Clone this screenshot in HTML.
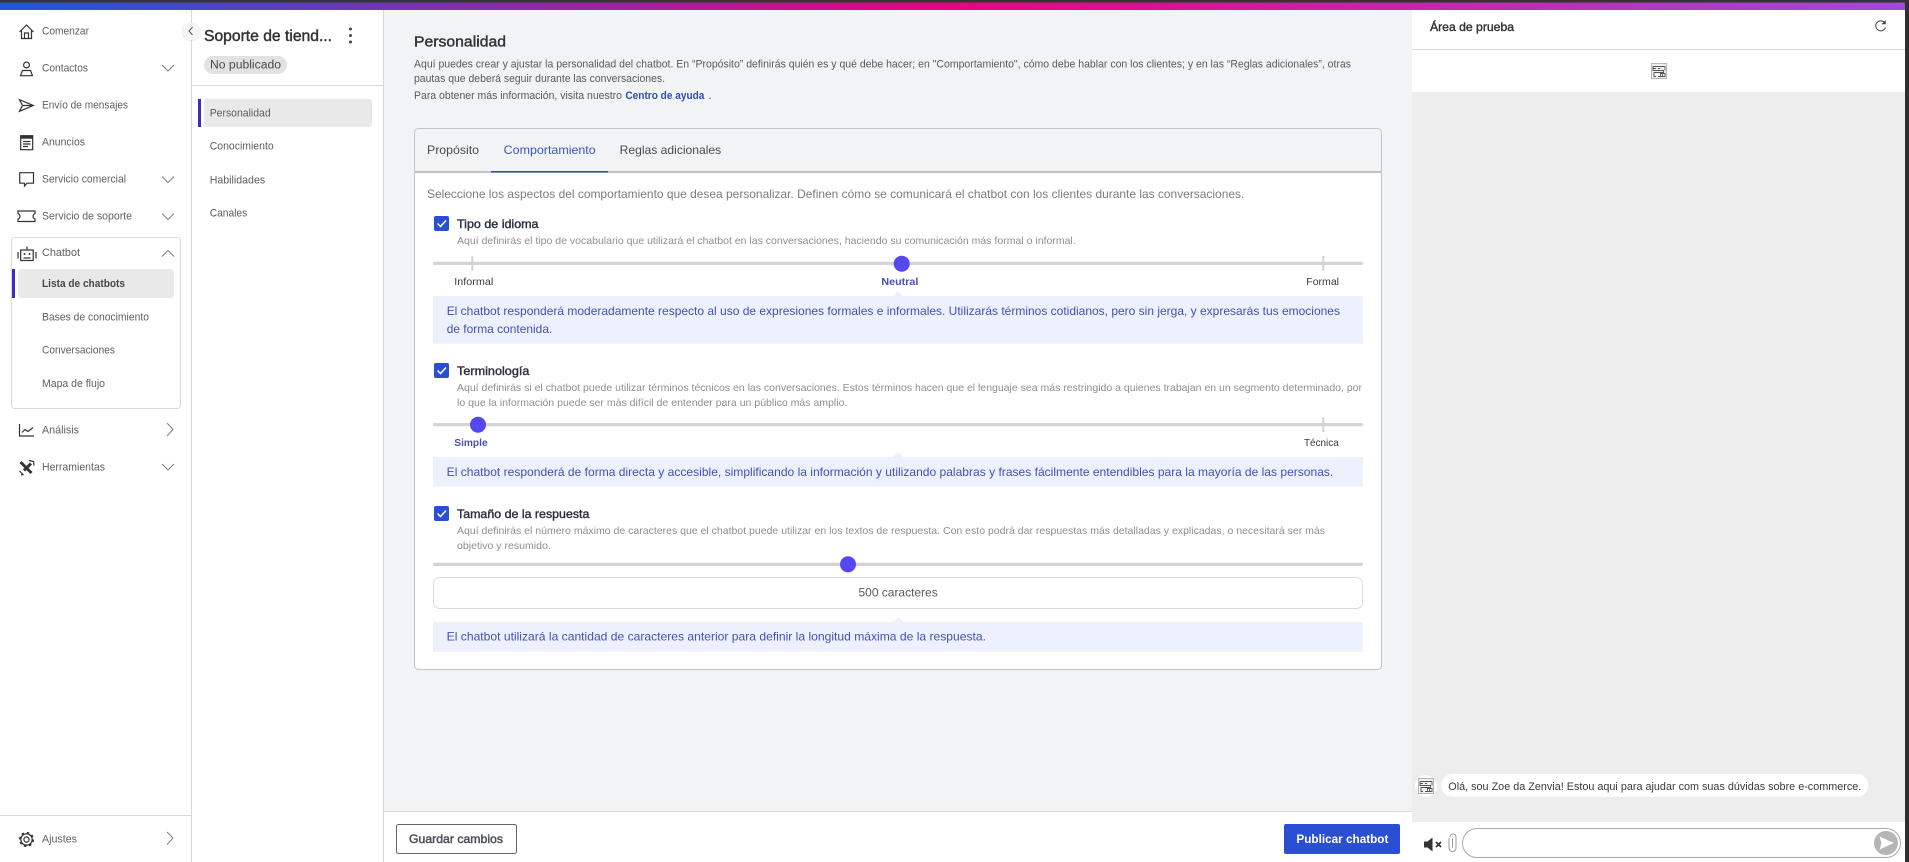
<!DOCTYPE html>
<html lang="es">
<head>
<meta charset="utf-8">
<title>Personalidad - Chatbot</title>
<style>
html,body{margin:0;padding:0;background:#fff;width:1909px;height:862px;overflow:hidden}
svg{display:block}
text{font-family:"Liberation Sans",Arial,sans-serif;white-space:pre}
.nav{font-size:11px;fill:#606060}
.nv2{font-size:11px;fill:#5c5c5c}
.desc{font-size:11px;fill:#5a5a5a}
.tab{font-size:12px;fill:#4a4a4a}
.sub{font-size:10.5px;fill:#8f8f8f}
.ttl{font-size:12px;fill:#2d3040;stroke:#2d3040;stroke-width:.4}
.note{font-size:12px;fill:#4351b4}
.lbl{font-size:10.5px;fill:#3a3a3a}
.lblb{font-size:10.5px;fill:#4a50ac;font-weight:700}
.ic{fill:none;stroke:#333;stroke-width:1.2}
.ch{fill:none;stroke:#808080;stroke-width:1}
.tick{fill:#d3d3d8}
.track{fill:#d3d3d8}
.thumb{fill:#5548f0}
.nb{fill:#ecf1fd}
</style>
</head>
<body>
<svg width="1909" height="862" viewBox="0 0 1909 862" xmlns="http://www.w3.org/2000/svg">
<defs>
<linearGradient id="g" x1="0" x2="1" y1="0" y2="0">
<stop offset="0" stop-color="#2058d8"/>
<stop offset=".5" stop-color="#e6057f"/>
<stop offset="1" stop-color="#a04ad8"/>
</linearGradient>
<symbol id="maze" viewBox="0 0 16 16">
<rect x=".5" y=".5" width="15" height="15" fill="#f0f0f0" stroke="#b5b5b5"/>
<path d="M2 3.500H14M2 5.500H5M7 5.500H9M2 3.500V7.500H12.500V9.500H3V13.500H5M14 3.500V7.500M7 13.500H14V10.500H9.500V13.500M11.500 10.500V13.500" fill="none" stroke="#555" stroke-width=".9"/>
</symbol>
</defs>

<!-- page -->
<rect width="1909" height="862" fill="#fff"/>
<rect x="384" y="10" width="1028" height="802" fill="#f2f3f5"/>
<rect x="1412" y="92" width="493" height="730" fill="#ededed"/>
<rect x="1905" y="0" width="4" height="862" fill="#2f2f2f"/>
<rect width="1909" height="2.500" fill="#333"/>
<rect y="2.500" width="1905" height="7.500" fill="url(#g)"/>

<!-- dividers -->
<rect x="191" y="10" width="1" height="852" fill="#d9d9d9"/>
<rect x="383" y="10" width="1" height="852" fill="#d9d9d9"/>
<rect x="192" y="85" width="192" height="1" fill="#d9d9d9"/>
<rect x="0" y="815" width="191" height="1" fill="#d9d9d9"/>
<rect x="384" y="811" width="1028" height="1" fill="#d9d9d9"/>

<!-- sidebar -->
<rect x="11.500" y="237.500" width="169" height="171" rx="3" fill="#fff" stroke="#d9d9d9"/>
<rect x="18" y="269" width="156" height="29" rx="3" fill="#e9e9e9"/>
<rect x="12" y="269" width="3" height="29" fill="#3f28c4"/>

<text class="nav" x="42" y="34.500" textLength="47" lengthAdjust="spacingAndGlyphs">Comenzar</text>
<text class="nav" x="42" y="71.500" textLength="46" lengthAdjust="spacingAndGlyphs">Contactos</text>
<text class="nav" x="42" y="108.500" textLength="86" lengthAdjust="spacingAndGlyphs">Envío de mensajes</text>
<text class="nav" x="42" y="145.500" textLength="43" lengthAdjust="spacingAndGlyphs">Anuncios</text>
<text class="nav" x="42" y="182.500" textLength="84" lengthAdjust="spacingAndGlyphs">Servicio comercial</text>
<text class="nav" x="42" y="219.500" textLength="90" lengthAdjust="spacingAndGlyphs">Servicio de soporte</text>
<text class="nav" x="42" y="256" textLength="38" lengthAdjust="spacingAndGlyphs">Chatbot</text>
<text x="42" y="287" font-size="11" font-weight="700" fill="#484848" textLength="83" lengthAdjust="spacingAndGlyphs">Lista de chatbots</text>
<text class="nav" x="42" y="320.500" textLength="107" lengthAdjust="spacingAndGlyphs">Bases de conocimiento</text>
<text class="nav" x="42" y="353.500" textLength="73" lengthAdjust="spacingAndGlyphs">Conversaciones</text>
<text class="nav" x="42" y="387" textLength="63" lengthAdjust="spacingAndGlyphs">Mapa de flujo</text>
<text class="nav" x="42" y="433.500" textLength="37" lengthAdjust="spacingAndGlyphs">Análisis</text>
<text class="nav" x="42" y="470.500" textLength="63" lengthAdjust="spacingAndGlyphs">Herramientas</text>
<text class="nav" x="42" y="842.500" textLength="35" lengthAdjust="spacingAndGlyphs">Ajustes</text>

<!-- sidebar chevrons -->
<path class="ch" d="M162 65L168 71L174 65M162 176.500L168 182.500L174 176.500M162 213.500L168 219.500L174 213.500M162 256.500L168 250.500L174 256.500M162 464L168 470L174 464"/>
<path class="ch" d="M167 423L173 429.500L167 436M167 832L173 838L167 844.500"/>

<!-- sidebar icons -->
<path class="ic" d="M19.500 32L26.500 25L33.500 32M21.500 30.500V38.500H31.500V30.500M24.500 38.500V33H28.500V38.500"/>
<circle class="ic" cx="26.500" cy="65" r="2.900"/>
<path class="ic" d="M22.500 70.500H30.500L32.500 75.700H20.500Z"/>
<path class="ic" d="M19.500 99.700L33.300 105.500L19.500 111.300L22.500 105.500ZM22.500 105.500H33"/>
<rect class="ic" x="20.700" y="135.700" width="12" height="14"/>
<rect x="20.700" y="135.700" width="12" height="3" fill="#333"/>
<path class="ic" stroke-width="1" d="M23 141.500H30.500M23 144H30.500M23 146.500H28"/>
<path class="ic" d="M19.700 172.700H33.500V183.200H27L24.500 186V183.200H19.700Z"/>
<path class="ic" d="M18 211H35V213.500C32.500 214.500 32.500 218 35 219V221.500H18V219C20.500 218 20.500 214.500 18 213.500Z"/>
<rect class="ic" x="20.700" y="250" width="12.500" height="10.500"/>
<path class="ic" d="M27 246.500V250M18 252V258.500M36 252V258.500"/>
<circle cx="24.500" cy="254" r="1" fill="#333"/><circle cx="29.500" cy="254" r="1" fill="#333"/>
<path class="ic" stroke-width="1" d="M23.500 258H30.500"/>
<path class="ic" d="M19.500 424V436H34M22 432.500L25 429.500L28 431.500L33 427.500"/>
<path d="M20.500 462L31.500 473M31 463.500L24 470.500" fill="none" stroke="#333" stroke-width="3"/>
<path class="ic" d="M29 460.500L33.500 461.500L34 465.500M19.500 471L23 474.500L21 475"/>
<circle class="ic" cx="26.500" cy="839.500" r="2.600"/>
<circle class="ic" cx="26.500" cy="839.500" r="5.700"/>
<circle cx="26.500" cy="839.500" r="6.800" fill="none" stroke="#333" stroke-width="1.500" stroke-dasharray="2.600 2.740"/>

<!-- second panel -->
<circle cx="191" cy="32" r="9.500" fill="#000" opacity=".06"/>
<circle cx="191" cy="31.500" r="8.500" fill="#f6f6f6"/>
<path d="M192.500 27L189 31L192.500 35" fill="none" stroke="#555" stroke-width="1"/>
<text x="204" y="41" font-size="15.500" fill="#333" stroke="#333" stroke-width=".45" textLength="128" lengthAdjust="spacingAndGlyphs">Soporte de tiend...</text>
<circle cx="350.500" cy="29" r="1.500" fill="#444"/><circle cx="350.500" cy="35.500" r="1.500" fill="#444"/><circle cx="350.500" cy="42" r="1.500" fill="#444"/>
<rect x="204" y="56" width="83" height="18" rx="9" fill="#e2e2e2"/>
<text x="210" y="68.700" font-size="11.500" fill="#4a4a4a" textLength="71" lengthAdjust="spacingAndGlyphs">No publicado</text>
<rect x="204" y="99" width="168" height="28" rx="3" fill="#e9e9e9"/>
<rect x="198" y="99" width="3" height="28" fill="#3f28c4"/>
<text class="nv2" x="209.700" y="116.500" textLength="61" lengthAdjust="spacingAndGlyphs">Personalidad</text>
<text class="nv2" x="209.700" y="149.700" textLength="64" lengthAdjust="spacingAndGlyphs">Conocimiento</text>
<text class="nv2" x="209.700" y="183.500" textLength="55.500" lengthAdjust="spacingAndGlyphs">Habilidades</text>
<text class="nv2" x="209.700" y="216.500" textLength="37.500" lengthAdjust="spacingAndGlyphs">Canales</text>

<!-- main header -->
<text x="414" y="46.500" font-size="15" fill="#333" stroke="#333" stroke-width=".4" textLength="92" lengthAdjust="spacingAndGlyphs">Personalidad</text>
<text class="desc" x="414" y="67.500" textLength="937" lengthAdjust="spacingAndGlyphs">Aquí puedes crear y ajustar la personalidad del chatbot. En “Propósito” definirás quién es y qué debe hacer; en "Comportamiento", cómo debe hablar con los clientes; y en las “Reglas adicionales”, otras</text>
<text class="desc" x="414" y="82" textLength="251" lengthAdjust="spacingAndGlyphs">pautas que deberá seguir durante las conversaciones.</text>
<text class="desc" x="414" y="99" textLength="208" lengthAdjust="spacingAndGlyphs">Para obtener más información, visita nuestro</text>
<text x="625.400" y="99" font-size="11" font-weight="700" fill="#2a4fb8" textLength="79" lengthAdjust="spacingAndGlyphs">Centro de ayuda</text>
<text class="desc" x="708.500" y="99">.</text>

<!-- card -->
<rect x="414.500" y="128.500" width="967" height="541" rx="4" fill="#fff" stroke="#c4c4c4"/>
<path d="M415 171V132.500Q415 129 418.500 129H1377.500Q1381 129 1381 132.500V171Z" fill="#f2f3f5"/>
<rect x="415" y="171" width="966" height="2" fill="#c2c2c2"/>
<rect x="491" y="171" width="117" height="1.500" fill="#2f4fb4"/>
<text class="tab" x="427" y="154" textLength="52" lengthAdjust="spacingAndGlyphs">Propósito</text>
<text class="tab" x="503.700" y="154" textLength="92" lengthAdjust="spacingAndGlyphs" style="fill:#3a56c0">Comportamiento</text>
<text class="tab" x="619.700" y="154" textLength="101.500" lengthAdjust="spacingAndGlyphs">Reglas adicionales</text>
<text x="427" y="198" font-size="12" fill="#7c7c7c" textLength="817.300" lengthAdjust="spacingAndGlyphs">Seleccione los aspectos del comportamiento que desea personalizar. Definen cómo se comunicará el chatbot con los clientes durante las conversaciones.</text>

<!-- section 1 -->
<rect x="434" y="216" width="15" height="15" rx="2" fill="#2a4fd0"/>
<path d="M437.500 223.500L440.500 226.500L446 220.500" fill="none" stroke="#fff" stroke-width="1.500"/>
<text class="ttl" x="457" y="228" textLength="81.500" lengthAdjust="spacingAndGlyphs">Tipo de idioma</text>
<text class="sub" x="457" y="244" textLength="618.700" lengthAdjust="spacingAndGlyphs">Aquí definirás el tipo de vocabulario que utilizará el chatbot en las conversaciones, haciendo su comunicación más formal o informal.</text>
<rect class="track" x="433" y="261.700" width="930" height="3.300" rx="1.500"/>
<rect class="tick" x="471.300" y="256" width="2" height="14.700"/>
<rect class="tick" x="1322.300" y="256" width="2" height="14.700"/>
<circle class="thumb" cx="901.700" cy="263.700" r="8"/>
<text class="lbl" x="454.300" y="285" textLength="39" lengthAdjust="spacingAndGlyphs">Informal</text>
<text class="lblb" x="881.400" y="285" textLength="37" lengthAdjust="spacingAndGlyphs">Neutral</text>
<text class="lbl" x="1306.300" y="285" textLength="32.700" lengthAdjust="spacingAndGlyphs">Formal</text>
<path class="nb" d="M893 296L898 290.700L903 296Z"/>
<rect class="nb" x="433" y="296" width="930" height="47.700"/>
<text class="note" x="446.700" y="315" textLength="893.300" lengthAdjust="spacingAndGlyphs">El chatbot responderá moderadamente respecto al uso de expresiones formales e informales. Utilizarás términos cotidianos, pero sin jerga, y expresarás tus emociones</text>
<text class="note" x="446.700" y="333" textLength="105.600" lengthAdjust="spacingAndGlyphs">de forma contenida.</text>

<!-- section 2 -->
<rect x="434" y="363" width="15" height="15" rx="2" fill="#2a4fd0"/>
<path d="M437.500 370.500L440.500 373.500L446 367.500" fill="none" stroke="#fff" stroke-width="1.500"/>
<text class="ttl" x="457" y="375" textLength="72.400" lengthAdjust="spacingAndGlyphs">Terminología</text>
<text class="sub" x="457" y="391" textLength="905" lengthAdjust="spacingAndGlyphs">Aquí definirás si el chatbot puede utilizar términos técnicos en las conversaciones. Estos términos hacen que el lenguaje sea más restringido a quienes trabajan en un segmento determinado, por</text>
<text class="sub" x="457" y="406" textLength="390.400" lengthAdjust="spacingAndGlyphs">lo que la información puede ser más difícil de entender para un público más amplio.</text>
<rect class="track" x="433" y="423" width="930" height="3.300" rx="1.500"/>
<rect class="tick" x="1322.300" y="417.300" width="2" height="14.700"/>
<circle class="thumb" cx="478" cy="424.700" r="8"/>
<text class="lblb" x="454.300" y="446" textLength="33.300" lengthAdjust="spacingAndGlyphs">Simple</text>
<text class="lbl" x="1304" y="446" textLength="34.700" lengthAdjust="spacingAndGlyphs">Técnica</text>
<path class="nb" d="M893 457L898 451.700L903 457Z"/>
<rect class="nb" x="433" y="457" width="930" height="29.700"/>
<text class="note" x="446.700" y="476" textLength="886.600" lengthAdjust="spacingAndGlyphs">El chatbot responderá de forma directa y accesible, simplificando la información y utilizando palabras y frases fácilmente entendibles para la mayoría de las personas.</text>

<!-- section 3 -->
<rect x="434" y="506" width="15" height="15" rx="2" fill="#2a4fd0"/>
<path d="M437.500 513.500L440.500 516.500L446 510.500" fill="none" stroke="#fff" stroke-width="1.500"/>
<text class="ttl" x="457" y="518" textLength="132.400" lengthAdjust="spacingAndGlyphs">Tamaño de la respuesta</text>
<text class="sub" x="457" y="534" textLength="868" lengthAdjust="spacingAndGlyphs">Aquí definirás el número máximo de caracteres que el chatbot puede utilizar en los textos de respuesta. Con esto podrá dar respuestas más detalladas y explicadas, o necesitará ser más</text>
<text class="sub" x="457" y="549" textLength="93.800" lengthAdjust="spacingAndGlyphs">objetivo y resumido.</text>
<rect class="track" x="433" y="562.700" width="930" height="3.300" rx="1.500"/>
<circle class="thumb" cx="848" cy="564.300" r="8"/>
<rect x="433.500" y="577.500" width="929" height="31" rx="6" fill="#fff" stroke="#dcdcdc"/>
<text x="858.500" y="596.700" font-size="12" fill="#5a5a5a" textLength="79.200" lengthAdjust="spacingAndGlyphs">500 caracteres</text>
<path class="nb" d="M893 622L898 617L903 622Z"/>
<rect class="nb" x="433" y="622" width="930" height="29.700"/>
<text class="note" x="446.700" y="640.700" textLength="539.300" lengthAdjust="spacingAndGlyphs">El chatbot utilizará la cantidad de caracteres anterior para definir la longitud máxima de la respuesta.</text>

<!-- footer buttons -->
<rect x="396.500" y="824.500" width="120" height="29" rx="2" fill="#fff" stroke="#666"/>
<text x="409" y="843" font-size="12" fill="#4a4d58" stroke="#4a4d58" stroke-width=".45" textLength="94" lengthAdjust="spacingAndGlyphs">Guardar cambios</text>
<rect x="1284" y="824" width="116" height="30" rx="2" fill="#2a4fd4"/>
<text x="1296.400" y="843" font-size="12" font-weight="700" fill="#fff" textLength="92" lengthAdjust="spacingAndGlyphs">Publicar chatbot</text>

<!-- test area -->
<rect x="1412" y="49" width="493" height="1" fill="#d9d9d9"/>
<text x="1430" y="31" font-size="12" fill="#333" stroke="#333" stroke-width=".4" textLength="84" lengthAdjust="spacingAndGlyphs">Área de prueba</text>
<path d="M1884.500 22.500A5 5 0 1 0 1885.500 27.500" fill="none" stroke="#444" stroke-width="1"/>
<path d="M1885.500 20.500V24H1882Z" fill="#444" stroke="#444" stroke-width=".5"/>
<use href="#maze" x="1651" y="63" width="16" height="16"/>

<circle cx="1426" cy="786" r="11" fill="#fff"/>
<use href="#maze" x="1418" y="778" width="16" height="16"/>
<rect x="1441.300" y="774" width="427" height="22.700" rx="11" fill="#fff"/>
<text x="1448.300" y="790" font-size="11" fill="#3a3a3a" textLength="413" lengthAdjust="spacingAndGlyphs">Olá, sou Zoe da Zenvia! Estou aqui para ajudar com suas dúvidas sobre e-commerce.</text>

<path d="M1424 841.500H1427.500L1432.500 837.500V851.500L1427.500 847.500H1424Z" fill="#333"/>
<path d="M1436 842L1441 847M1441 842L1436 847" stroke="#333" stroke-width="1.700" fill="none"/>
<path d="M1452.500 838.500V847.500M1449 838.500V848A3.500 3.500 0 0 0 1456 848V837A3 3 0 0 0 1450 837" fill="none" stroke="#999" stroke-width="1"/>
<rect x="1462.500" y="828.500" width="438" height="29" rx="14.500" fill="#fff" stroke="#aaa"/>
<circle cx="1886" cy="843" r="12" fill="#b5b5b5"/>
<path d="M1879.500 836.500L1894 843L1879.500 849.500L1881.500 843Z" fill="#fff"/>
</svg>
</body>
</html>
